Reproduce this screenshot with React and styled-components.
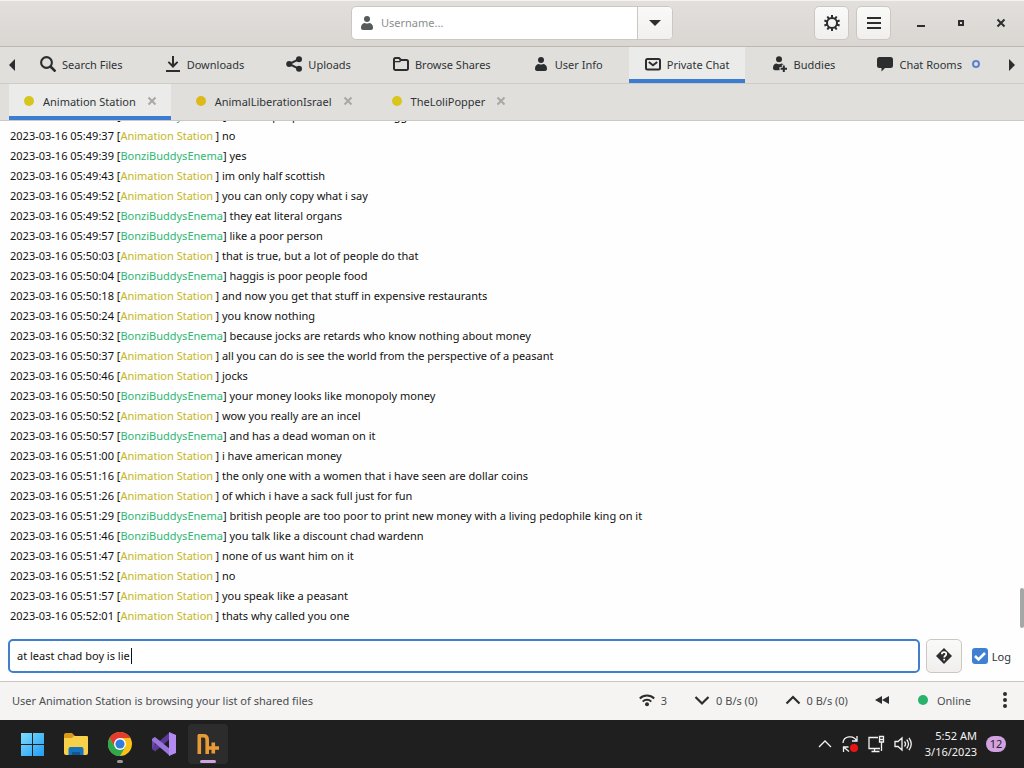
import React from "react";
import styled, { createGlobalStyle, css } from "styled-components";

const Global = createGlobalStyle`
  * { box-sizing: border-box; }
  html, body, #root { height: 100%; margin: 0; }
  body, button, input {
    font-family: "Noto Sans", "Open Sans", sans-serif;
    font-size: 11px;
    color: #2e3436;
  }
  button { margin: 0; padding: 0; border: 0; background: none; cursor: pointer; }
  svg { display: block; flex: none; }
`;

const Page = styled.div`
  display: flex;
  flex-direction: column;
  height: 100%;
  min-height: 400px;
  overflow: hidden;
  background: #fefefe;
`;

const TitleBar = styled.header`
  display: grid;
  grid-template-columns: 1fr minmax(200px, 322px) 1fr;
  align-items: center;
  height: 47px;
  flex: none;
  padding-bottom: 1px;
  border-top: 1px solid #f4f3f1;
  border-bottom: 1px solid #bdb8b3;
  background: linear-gradient(#e2dfdc, #dad6d2);
`;

const SearchBox = styled.div`
  grid-column: 2;
  display: flex;
  height: 34px;
  border: 1px solid #cdc7c2;
  border-radius: 5px;
  background: #fff;
  overflow: hidden;
`;

const SearchField = styled.label`
  display: flex;
  flex: 1;
  align-items: center;
  gap: 6px;
  padding-left: 7px;
  color: #555a5b;
`;

const SearchInput = styled.input`
  flex: 1;
  min-width: 0;
  border: 0;
  outline: 0;
  padding: 0 0 2px;
  background: transparent;
  &::placeholder { color: #8b8e8f; opacity: 1; }
`;

const DropButton = styled.button`
  display: grid;
  place-items: center;
  width: 35px;
  border-left: 1px solid #cdc7c2;
  background: linear-gradient(#f9f9f8, #f1f0ef);
`;

const WindowActions = styled.div`
  display: flex;
  justify-content: flex-end;
  align-items: center;
  gap: 7px;
  padding-right: 3px;
`;

const ToolButton = styled.button`
  display: grid;
  place-items: center;
  width: 35px;
  height: 34px;
  border: 1px solid #cdc7c2;
  border-radius: 5px;
  background: linear-gradient(#fafaf9, #f0efed);
`;

const WindowButtons = styled.div`
  display: flex;
  margin-left: 3px;
`;

const WindowButton = styled.button`
  display: grid;
  place-items: center;
  width: 40px;
  height: 34px;
`;

const MainNav = styled.nav`
  display: flex;
  height: 37px;
  flex: none;
  border-bottom: 1px solid #cfcbc7;
  background: #e1dfdc;
`;

const NavArrow = styled.button`
  display: grid;
  place-items: center;
  width: 24px;
`;

const NavTabs = styled.div`
  display: flex;
  flex: 1;
  justify-content: space-between;
  margin-right: 4px;
`;

const activeTab = css`
  background: #ebebe9;
  box-shadow: inset 0 -4px #3b7dd1;
`;

const NavTab = styled.button`
  display: flex;
  align-items: center;
  gap: 6px;
  padding: 0 16px 2px;
  white-space: nowrap;
  ${(p) => p.$active && activeTab}
`;

const Ring = styled.span`
  width: 8px;
  height: 8px;
  margin-left: 4px;
  border: 2px solid #5b83cc;
  border-radius: 50%;
`;

const ChatTabs = styled.div`
  display: flex;
  gap: 10px;
  height: 37px;
  flex: none;
  padding-left: 9px;
  border-bottom: 1px solid #cdc8c4;
  background: #e1dfdc;
`;

const ChatTab = styled.div`
  display: flex;
  align-items: center;
  gap: 11px;
  padding: 0 14px 2px 15px;
  white-space: nowrap;
  ${(p) => p.$active && activeTab}
`;

const ChatName = styled.button`
  display: flex;
  align-items: center;
  gap: 9px;
  height: 100%;
`;

const CloseButton = styled.button`
  display: grid;
  place-items: center;
  height: 20px;
`;

const Dot = styled.span`
  width: 10px;
  height: 10px;
  flex: none;
  border-radius: 50%;
  background: ${(p) => p.$color};
`;

const LogArea = styled.main`
  position: relative;
  display: flex;
  flex-direction: column;
  justify-content: flex-end;
  flex: 1;
  min-height: 0;
  overflow: hidden;
  padding: 0 10px 4px;
  background: #fefefe;
`;

const Line = styled.div`
  flex: none;
  height: 20px;
  line-height: 20px;
  white-space: nowrap;
  color: #111;
`;

const Nick = styled.span`
  display: inline-block;
  min-width: 95px;
  color: ${(p) => (p.$me ? "#2eb872" : "#c4b71f")};
`;

const ScrollThumb = styled.div`
  position: absolute;
  right: 0;
  bottom: 2px;
  width: 4px;
  height: 40px;
  border-radius: 2px;
  background: #a5a6a6;
`;

const EntryRow = styled.form`
  display: flex;
  align-items: center;
  flex: none;
  padding: 9px 13px 8px 8px;
`;

/* The text cursor is painted as a thin background bar after the draft text. */
const EntryInput = styled.input`
  flex: 1;
  min-width: 0;
  height: 34px;
  padding: 0 7px 2px;
  border: 2px solid #3f7fcb;
  border-radius: 5px;
  outline: 0;
  background: linear-gradient(#111, #111) 121px 7px / 1px 16px no-repeat #fff;
  color: #111;
  caret-color: transparent;
`;

const HelpButton = styled(ToolButton)`
  width: 36px;
  margin: 0 10px 0 6px;
`;

const CheckLabel = styled.label`
  display: flex;
  align-items: center;
  gap: 4px;
`;

const Check = styled.input`
  appearance: none;
  width: 16px;
  height: 16px;
  margin: 0;
  border-radius: 3px;
  background: #3f80d5
    url("data:image/svg+xml,%3Csvg xmlns='http://www.w3.org/2000/svg' viewBox='0 0 16 16'%3E%3Cpath d='M3 8l3.5 3.5L13 5' fill='none' stroke='white' stroke-width='2.6'/%3E%3C/svg%3E");
`;

const StatusBar = styled.footer`
  display: flex;
  align-items: center;
  height: 39px;
  flex: none;
  padding: 0 12px 2px;
  border-top: 1px solid #cac6c2;
  background: #f5f4f3;
  color: #4a4e50;
`;

const StatusText = styled.span`
  flex: 1;
  white-space: nowrap;
`;

const StatusItems = styled.div`
  display: flex;
  align-items: center;
  gap: 27px;
`;

const StatusButton = styled.button`
  display: flex;
  align-items: center;
  gap: ${(p) => p.$gap || 6}px;
  color: inherit;
  white-space: nowrap;
`;

const Taskbar = styled.div`
  display: flex;
  align-items: center;
  height: 48px;
  flex: none;
  padding: 0 18px 0 12px;
  background: #1f1f1f;
  color: #f2f2f2;
`;

const Apps = styled.div`
  display: flex;
  flex: 1;
  gap: 4px;
`;

const AppButton = styled.button`
  position: relative;
  display: grid;
  place-items: center;
  width: 40px;
  height: 40px;
  border-radius: 4px;
  background: ${(p) => (p.$active ? "#2c2c2c" : "transparent")};
`;

const Running = styled.span`
  position: absolute;
  bottom: 1px;
  left: 50%;
  transform: translateX(-50%);
  width: ${(p) => (p.$active ? 16 : 6)}px;
  height: 3px;
  border-radius: 2px;
  background: ${(p) => (p.$active ? "#cfa3dd" : "#9a9a9a")};
`;

const Tray = styled.div`
  display: flex;
  align-items: center;
  gap: 9px;
`;

const Clock = styled.time`
  margin-left: 4px;
  line-height: 16px;
  text-align: right;
  color: #f2f2f2;
`;

const Badge = styled.span`
  width: 20px;
  height: 16px;
  border-radius: 8px;
  background: #d3a2e0;
  color: #2b1b30;
  line-height: 16px;
  text-align: center;
`;

const INK = "#2b2d2e";

const Icon = ({ children, w = 16, h = 16, box, color = INK }) => (
  <svg width={w} height={h} viewBox={box || `0 0 ${w} ${h}`} fill={color} stroke="none" aria-hidden="true">
    {children}
  </svg>
);

const UserIcon = ({ color }) => (
  <Icon color={color}>
    <circle cx="8" cy="4" r="3" />
    <path d="M2 12.500C2 9.500 4 8 6 8c1 .8 3 .8 4 0 2 0 4 1.500 4 4.500V13c0 1-1 2-2 2H4c-1 0-2-1-2-2z" />
  </Icon>
);

const SearchIcon = () => (
  <Icon>
    <g fill="none" stroke={INK}>
      <circle cx="6.500" cy="6.500" r="5.400" strokeWidth="2.100" />
      <path d="M10.500 10.500l5 5" strokeWidth="2.600" />
    </g>
  </Icon>
);

const DownloadIcon = () => (
  <Icon>
    <path d="M7 0h2v8l3-2.800 1.300 1.400L8 12 2.700 6.600 4 5.200 7 8zM1 14h14v2H1z" />
  </Icon>
);

const ShareIcon = () => (
  <Icon>
    <circle cx="3.200" cy="8" r="3" />
    <circle cx="13" cy="3.200" r="3" />
    <circle cx="13" cy="12.800" r="3" />
    <path d="M13 3.200L3.200 8l9.800 4.800" fill="none" stroke={INK} strokeWidth="2" />
  </Icon>
);

const FolderIcon = () => (
  <Icon>
    <path d="M1 3.500A1.500 1.500 0 0 1 2.500 2H6l2 2h5.500A1.500 1.500 0 0 1 15 5.500v7a1.500 1.500 0 0 1-1.500 1.500h-11A1.500 1.500 0 0 1 1 12.500z" fill="none" stroke={INK} strokeWidth="2" />
    <path d="M2 5h4l1-1h2L7 6.200H2z" />
  </Icon>
);

const MailIcon = () => (
  <Icon>
    <g fill="none" stroke={INK} strokeWidth="2">
      <rect x="1" y="3" width="14" height="10.500" rx="1.500" />
      <path d="M3.800 6L8 9.300 12.200 6" />
    </g>
  </Icon>
);

const BuddyIcon = () => (
  <Icon>
    <circle cx="7" cy="3.200" r="3" />
    <path d="M1 12c0-3 1.600-4.500 3.500-4.500 1.200.9 3.600.9 4.800 0 .9 0 1.700.4 2.300 1.200H9.800v2.300H7.500v3.200H3c-1 0-2-1-2-2z" />
    <path d="M10.800 9.500h2v2.200H15v2h-2.200V16h-2v-2.300H8.600v-2h2.200z" />
  </Icon>
);

const ChatIcon = () => (
  <Icon>
    <path d="M2.500 1h11A2.500 2.500 0 0 1 16 3.500v6a2.500 2.500 0 0 1-2.500 2.500H8l-3.500 3.500V12h-2A2.500 2.500 0 0 1 0 9.500v-6A2.500 2.500 0 0 1 2.500 1z" />
  </Icon>
);

const GearIcon = () => (
  <Icon>
    <circle cx="8" cy="8" r="5" fill="none" stroke={INK} strokeWidth="2" />
    {[0, 36, 72, 108, 144, 180, 216, 252, 288, 324].map((a) => (
      <rect key={a} x="7" y="0" width="2" height="3" transform={`rotate(${a} 8 8)`} />
    ))}
  </Icon>
);

const CrossIcon = ({ color = INK }) => (
  <Icon w={10} h={10}>
    <path d="M1.500 1.500l7 7M8.500 1.500l-7 7" stroke={color} strokeWidth="2" />
  </Icon>
);

const WifiIcon = () => (
  <Icon>
    <g fill="none" stroke={INK} strokeWidth="2">
      <path d="M.800 6.500a10.200 10.200 0 0 1 14.400 0" />
      <path d="M3.700 9.600a6.200 6.200 0 0 1 8.600 0" />
    </g>
    <circle cx="8" cy="12.200" r="2" />
  </Icon>
);

const Chevron = ({ up }) => (
  <Icon>
    <path d={up ? "M1.500 11.500L8 5l6.500 6.500" : "M1.500 5L8 11.500 14.500 5"} fill="none" stroke={INK} strokeWidth="2.200" />
  </Icon>
);

const WindowsLogo = () => (
  <svg width="24" height="24" viewBox="0 0 24 24" aria-hidden="true">
    <defs>
      <linearGradient id="win" x1="0" y1="0" x2="1" y2="1">
        <stop offset="0" stopColor="#7fdcfb" />
        <stop offset="1" stopColor="#1f9df5" />
      </linearGradient>
    </defs>
    <path d="M1 1h11v11H1zM13 1h11v11H13zM1 13h11v11H1zM13 13h11v11H13z" fill="url(#win)" />
  </svg>
);

const ExplorerLogo = () => (
  <svg width="26" height="24" viewBox="0 0 26 24" aria-hidden="true">
    <path d="M1 3a2 2 0 0 1 2-2h6l3 3h12v6H1z" fill="#d99a1b" />
    <path d="M1 6h8l2-2h13a1 1 0 0 1 1 1v16a2 2 0 0 1-2 2H3a2 2 0 0 1-2-2z" fill="#f8d14a" />
    <path d="M5.500 23v-6a2 2 0 0 1 2-2h11a2 2 0 0 1 2 2v6z" fill="#1673bd" />
    <path d="M9 23v-3h8v3z" fill="#12578f" />
  </svg>
);

const ChromeLogo = () => (
  <svg width="24" height="24" viewBox="0 0 24 24" aria-hidden="true">
    <circle cx="12" cy="12" r="12" fill="#fbc116" />
    <path d="M1.600 6A12 12 0 0 1 22.400 6H12l-5.200 9z" fill="#e33b2e" />
    <path d="M1.600 6l5.200 9 10.400 0L12 24A12 12 0 0 1 1.600 6z" fill="#2da94f" />
    <circle cx="12" cy="12" r="6" fill="#fff" />
    <circle cx="12" cy="12" r="4.600" fill="#2f7de1" />
  </svg>
);

const StudioLogo = () => (
  <svg width="24" height="24" viewBox="0 0 24 24" aria-hidden="true">
    <path d="M0 7l3-2v14l-3-2z" fill="#6a45a8" />
    <path d="M0 16.500L3 19.500 18 7V0L2 14z" fill="#5c3b95" />
    <path d="M3 5l15 12v7L0 8.500V7z" fill="#9a75dc" />
    <path d="M17 0l7 3v18l-7 3z" fill="#b28af0" />
  </svg>
);

const NicotineLogo = () => (
  <svg width="22" height="22" viewBox="0 0 22 22" aria-hidden="true">
    <g fill="none" stroke="#e89a35" strokeWidth="3.600">
      <path d="M2.300 21V2M1 2.800h5.500q3.700 0 3.700 4V21" />
      <path d="M11 15h11M16.300 9.500v11" />
    </g>
  </svg>
);

const TrayIcon = ({ w = 16, children }) => (
  <svg width={w} height="18" viewBox={`0 0 ${w} 18`} fill="none" stroke="#f2f2f2" strokeWidth="1.300" aria-hidden="true">
    {children}
  </svg>
);

const A = "Animation Station";
const B = "BonziBuddysEnema";

const messages = [
  ["05:49:35", B, "scottish people do in fact eat haggis"],
  ["05:49:37", A, "no"],
  ["05:49:39", B, "yes"],
  ["05:49:43", A, "im only half scottish"],
  ["05:49:52", A, "you can only copy what i say"],
  ["05:49:52", B, "they eat literal organs"],
  ["05:49:57", B, "like a poor person"],
  ["05:50:03", A, "that is true, but a lot of people do that"],
  ["05:50:04", B, "haggis is poor people food"],
  ["05:50:18", A, "and now you get that stuff in expensive restaurants"],
  ["05:50:24", A, "you know nothing"],
  ["05:50:32", B, "because jocks are retards who know nothing about money"],
  ["05:50:37", A, "all you can do is see the world from the perspective of a peasant"],
  ["05:50:46", A, "jocks"],
  ["05:50:50", B, "your money looks like monopoly money"],
  ["05:50:52", A, "wow you really are an incel"],
  ["05:50:57", B, "and has a dead woman on it"],
  ["05:51:00", A, "i have american money"],
  ["05:51:16", A, "the only one with a women that i have seen are dollar coins"],
  ["05:51:26", A, "of which i have a sack full just for fun"],
  ["05:51:29", B, "british people are too poor to print new money with a living pedophile king on it"],
  ["05:51:46", B, "you talk like a discount chad wardenn"],
  ["05:51:47", A, "none of us want him on it"],
  ["05:51:52", A, "no"],
  ["05:51:57", A, "you speak like a peasant"],
  ["05:52:01", A, "thats why called you one"],
];

const navTabs = [
  ["Search Files", SearchIcon],
  ["Downloads", DownloadIcon],
  ["Uploads", ShareIcon],
  ["Browse Shares", FolderIcon],
  ["User Info", UserIcon],
  ["Private Chat", MailIcon],
  ["Buddies", BuddyIcon],
  ["Chat Rooms", ChatIcon],
];

const chats = [
  [A, "#d6c51c"],
  ["AnimalLiberationIsrael", "#dcb91c"],
  ["TheLoliPopper", "#d9c51c"],
];

export default function App() {
  return (
    <Page>
      <Global />
      <TitleBar>
        <SearchBox>
          <SearchField>
            <UserIcon color="#555a5b" />
            <SearchInput placeholder="Username..." aria-label="Username" />
          </SearchField>
          <DropButton aria-label="Show users">
            <Icon w={12} h={6}><path d="M0 0h12L6 6z" /></Icon>
          </DropButton>
        </SearchBox>
        <WindowActions>
          <ToolButton aria-label="Preferences"><GearIcon /></ToolButton>
          <ToolButton aria-label="Menu">
            <Icon><path d="M1 2h14v2H1zM1 7h14v2H1zM1 12h14v2H1z" /></Icon>
          </ToolButton>
          <WindowButtons>
            <WindowButton aria-label="Minimize">
              <Icon w={8} h={10}><path d="M0 7h8v2H0z" /></Icon>
            </WindowButton>
            <WindowButton aria-label="Maximize">
              <Icon w={6} h={6}><path d="M1 1h4v4H1z" fill="none" stroke={INK} strokeWidth="2" /></Icon>
            </WindowButton>
            <WindowButton aria-label="Close"><CrossIcon /></WindowButton>
          </WindowButtons>
        </WindowActions>
      </TitleBar>

      <MainNav>
        <NavArrow aria-label="Previous tabs"><Icon w={6} h={12}><path d="M6 0v12L0 6z" /></Icon></NavArrow>
        <NavTabs>
          {navTabs.map(([name, Glyph]) => (
            <NavTab key={name} $active={name === "Private Chat"}>
              <Glyph />
              {name}
              {name === "Chat Rooms" && <Ring />}
            </NavTab>
          ))}
        </NavTabs>
        <NavArrow aria-label="More tabs"><Icon w={6} h={12}><path d="M0 0v12l6-6z" /></Icon></NavArrow>
      </MainNav>

      <ChatTabs>
        {chats.map(([name, color], i) => (
          <ChatTab key={name} $active={i === 0}>
            <ChatName><Dot $color={color} />{name}</ChatName>
            <CloseButton aria-label={`Close ${name}`}><CrossIcon color="#aaa7a4" /></CloseButton>
          </ChatTab>
        ))}
      </ChatTabs>

      <LogArea>
        {messages.map(([time, nick, text]) => (
          <Line key={time + text}>
            2023-03-16 {time} [<Nick $me={nick === B}>{nick}</Nick>] {text}
          </Line>
        ))}
        <ScrollThumb />
      </LogArea>

      <EntryRow onSubmit={(e) => e.preventDefault()}>
        <EntryInput defaultValue="at least chad boy is lie" aria-label="Message" />
        <HelpButton type="button" aria-label="Chat commands">
          <Icon>
            <path d="M8 0l8 8-8 8-8-8z" />
            <path d="M5.800 6.300C5.800 3.300 10.300 3.400 10.300 6 10.300 7.800 8.200 7.700 8.200 9.600M8.200 10.800v1.800" fill="none" stroke="#fff" strokeWidth="1.700" />
          </Icon>
        </HelpButton>
        <CheckLabel><Check type="checkbox" defaultChecked />Log</CheckLabel>
      </EntryRow>

      <StatusBar>
        <StatusText>User Animation Station is browsing your list of shared files</StatusText>
        <StatusItems>
          <StatusButton><WifiIcon />3</StatusButton>
          <StatusButton><Chevron />0 B/s (0)</StatusButton>
          <StatusButton><Chevron up />0 B/s (0)</StatusButton>
          <StatusButton aria-label="Alternative speed limits">
            <Icon><path d="M7 4v8L0 8zM14 4v8L7 8z" /></Icon>
          </StatusButton>
          <StatusButton $gap={9}><Dot $color="#27b36c" />Online</StatusButton>
          <StatusButton aria-label="More">
            <Icon w={14} h={16}>
              <circle cx="7" cy="2" r="2" /><circle cx="7" cy="8" r="2" /><circle cx="7" cy="14" r="2" />
            </Icon>
          </StatusButton>
        </StatusItems>
      </StatusBar>

      <Taskbar>
        <Apps>
          <AppButton aria-label="Start"><WindowsLogo /></AppButton>
          <AppButton aria-label="File Explorer"><ExplorerLogo /></AppButton>
          <AppButton aria-label="Chrome"><ChromeLogo /><Running /></AppButton>
          <AppButton aria-label="Visual Studio"><StudioLogo /></AppButton>
          <AppButton aria-label="Nicotine+" $active><NicotineLogo /><Running $active /></AppButton>
        </Apps>
        <Tray>
          <TrayIcon><path d="M2 12l6-6 6 6" /></TrayIcon>
          <TrayIcon>
            <path d="M1 8a7 6.500 0 0 1 13.500-2M15 1v5h-5M1.500 17v-5h5M2 12.500l5 4" />
            <circle cx="12" cy="13" r="4" fill="#ec1313" stroke="none" />
          </TrayIcon>
          <TrayIcon w={18}>
            <path d="M11 2.500H2v11h11M7.500 13.500v3M4.500 16.500h8M14.500 7v9M12.500 1.500h4V7h-4zM12.500 4.500h4" />
          </TrayIcon>
          <TrayIcon w={18}>
            <path d="M1 6.500v5h3l4 3.500V3L4 6.500zM10.500 6.500q2 2.500 0 5M12.700 4.500q3.600 4.500 0 9M15 2.800q4.500 6.200 0 12.400" />
          </TrayIcon>
          <Clock>5:52 AM<br />3/16/2023</Clock>
          <Badge>12</Badge>
        </Tray>
      </Taskbar>
    </Page>
  );
}
